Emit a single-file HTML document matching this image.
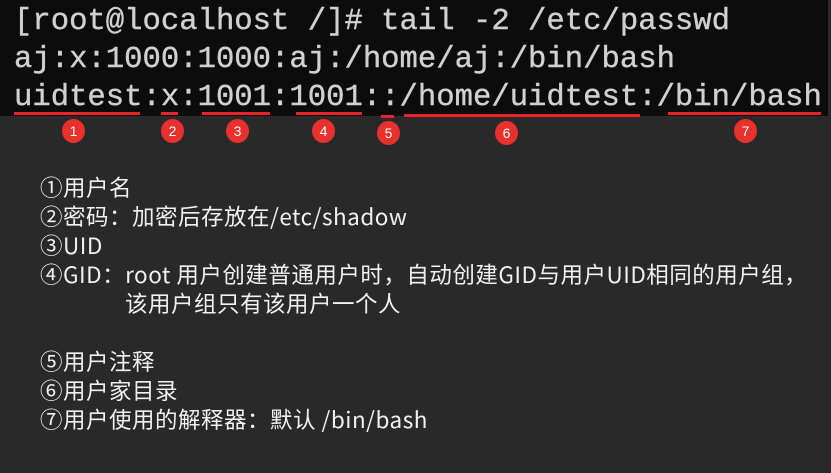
<!DOCTYPE html>
<html><head><meta charset="utf-8"><style>
body{margin:0;width:831px;height:473px;background:#292929;position:relative;overflow:hidden;font-family:"Noto Sans CJK SC",sans-serif}
.term{position:absolute;left:0;top:0;width:828px;height:116px;background:#0c0c0c}
.t{position:absolute;left:14px;font-family:"Liberation Mono",monospace;font-size:30.6px;color:#d0d0d0;white-space:pre;line-height:38px;-webkit-text-stroke:0.4px #d0d0d0}
.u{position:absolute;height:3px;background:#e8242a;top:112px}
.c{position:absolute;width:23px;height:24px;border-radius:50%;background:#e8302c;color:#fff;font-size:14px;text-align:center;line-height:24px;top:119px;font-family:"Liberation Sans",sans-serif}
.b{position:absolute;left:40px;color:#f0f0f0;font-size:22.5px;line-height:29px;white-space:nowrap;letter-spacing:0.5px}
.b div{height:29px}
</style></head><body>
<div class="term"></div>
<div class="t" style="top:3px">[root@localhost /]# tail -2 /etc/passwd</div>
<div class="t" style="top:41px">aj:x:1000:1000:aj:/home/aj:/bin/bash</div>
<div class="t" style="top:79px">uidtest:x:1001:1001::/home/uidtest:/bin/bash</div>
<div class="u" style="left:14px;width:126px"></div>
<div class="u" style="left:161px;width:17px"></div>
<div class="u" style="left:202px;width:68px"></div>
<div class="u" style="left:296px;width:66px"></div>
<div class="u" style="left:381px;width:13px;top:115px"></div>
<div class="u" style="left:404px;width:236px;top:114px"></div>
<div class="u" style="left:668px;width:153px"></div>
<div class="c" style="left:62px">1</div>
<div class="c" style="left:161px">2</div>
<div class="c" style="left:226px">3</div>
<div class="c" style="left:312px">4</div>
<div class="c" style="left:377px;top:121px">5</div>
<div class="c" style="left:495px;top:121px">6</div>
<div class="c" style="left:734px">7</div>
<div class="b" style="top:173px">
<div>①用户名</div>
<div>②密码：加密后存放在/etc/shadow</div>
<div>③UID</div>
<div>④GID：root 用户创建普通用户时，自动创建GID与用户UID相同的用户组，</div>
<div style="padding-left:85px">该用户组只有该用户一个人</div>
<div></div>
<div>⑤用户注释</div>
<div>⑥用户家目录</div>
<div>⑦用户使用的解释器：默认 /bin/bash</div>
</div>
</body></html>
